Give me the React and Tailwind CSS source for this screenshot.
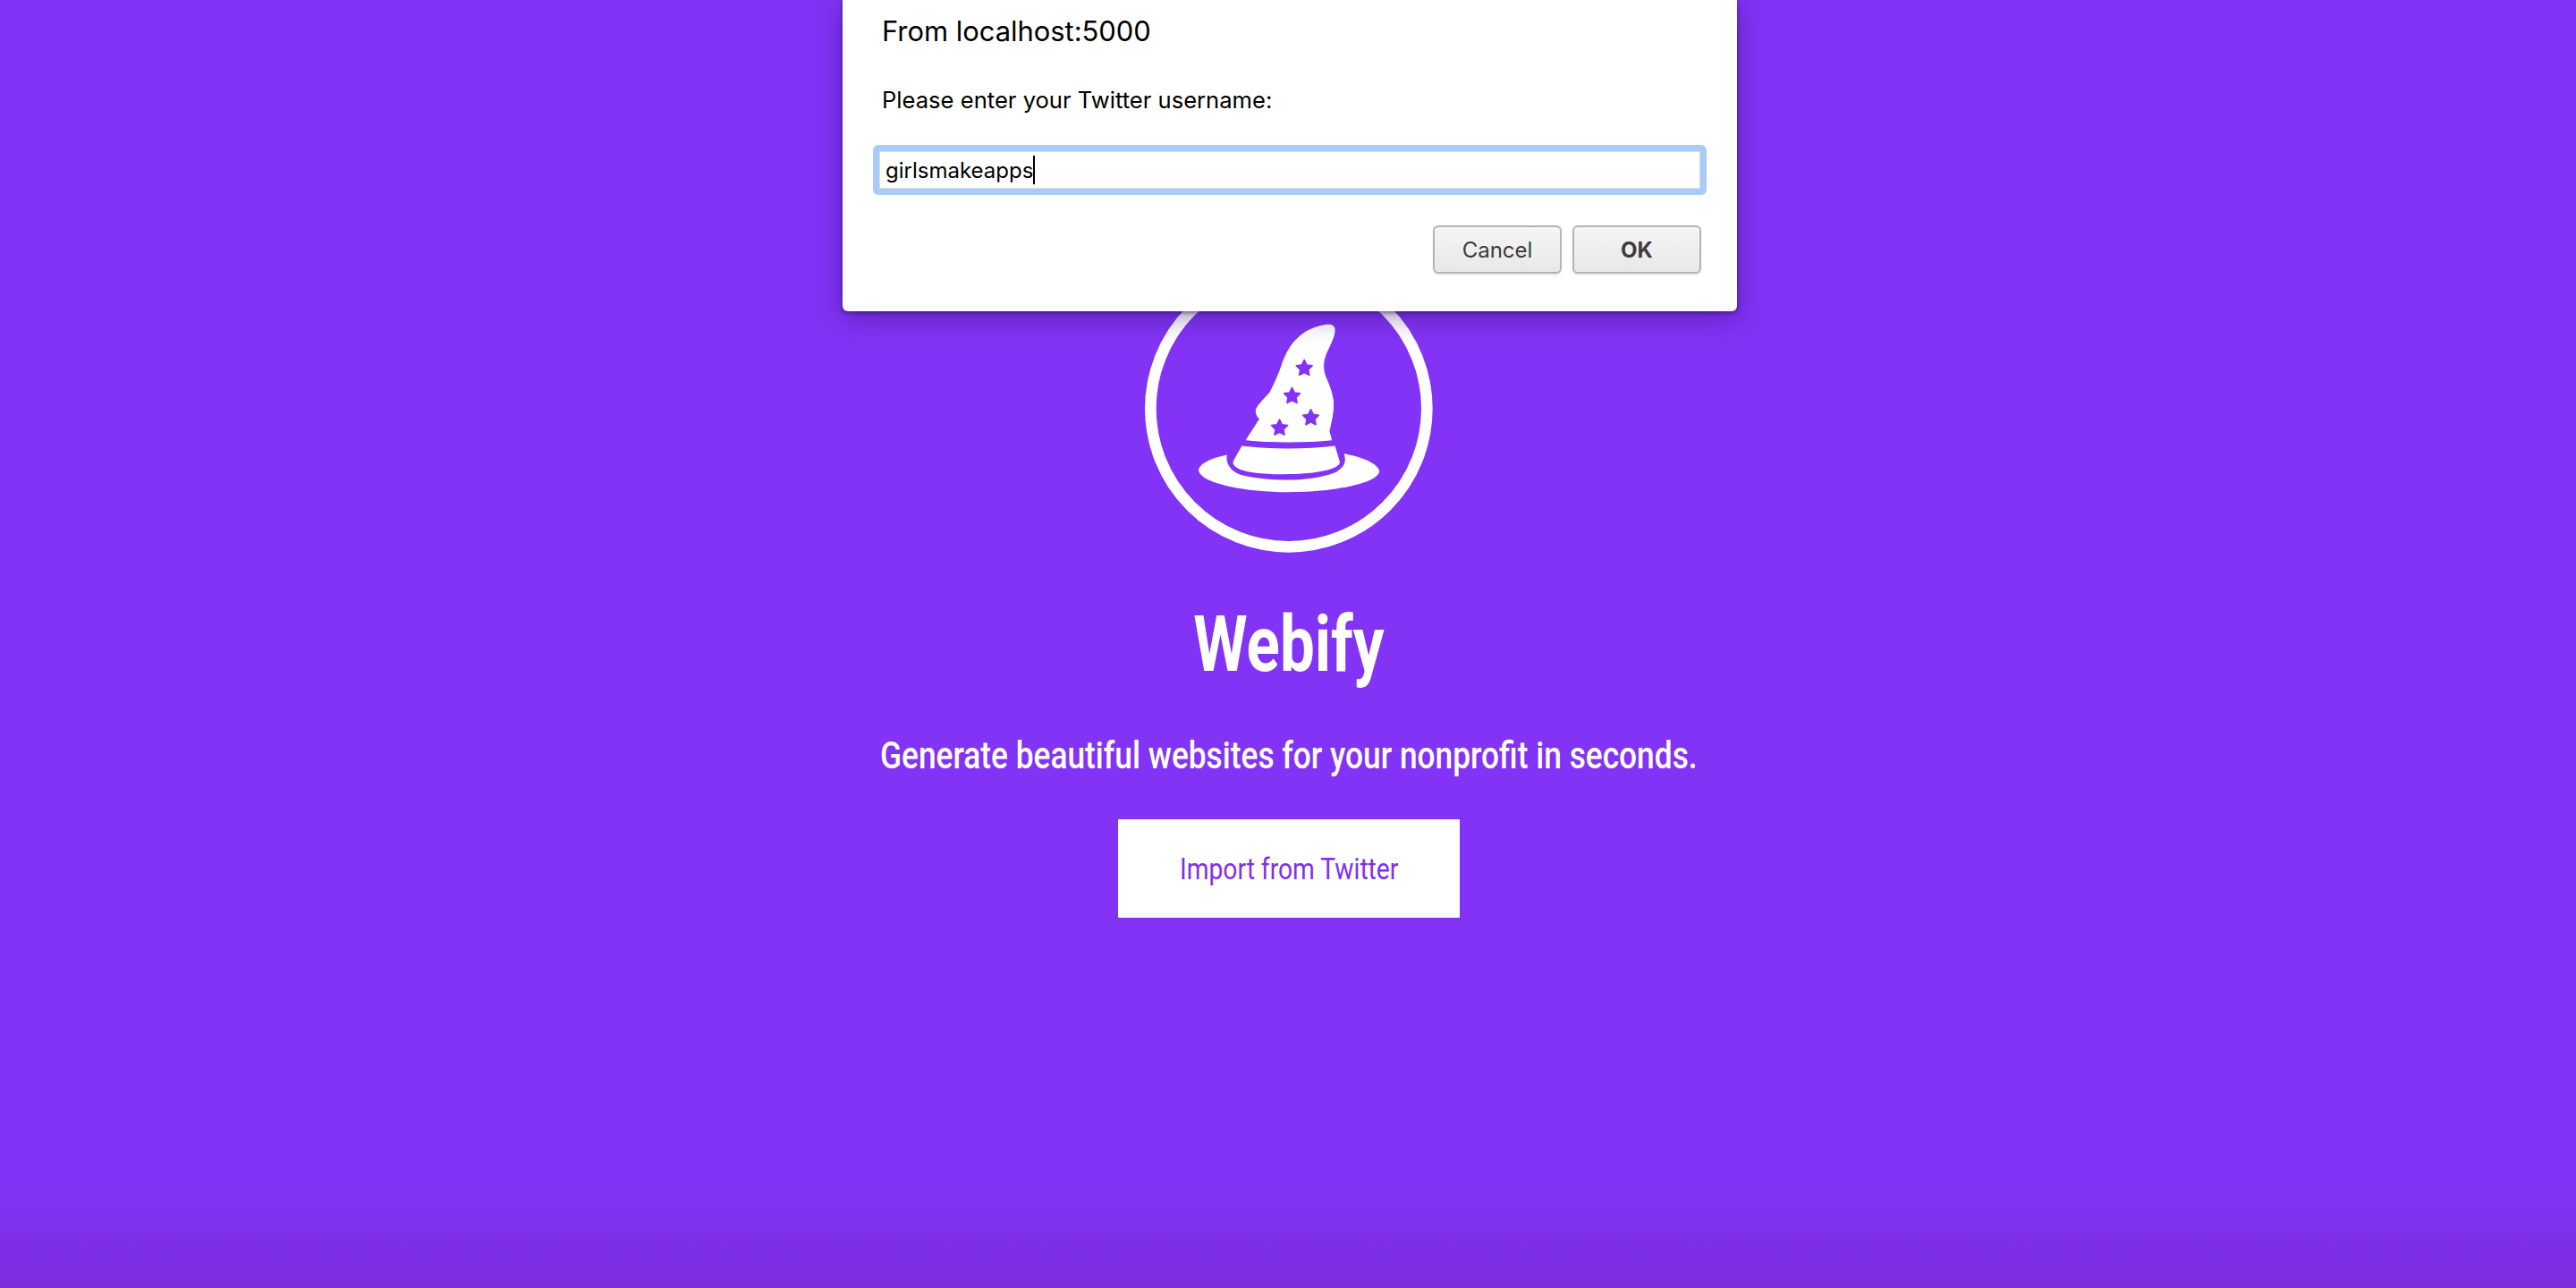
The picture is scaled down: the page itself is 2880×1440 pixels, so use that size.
export default function App() {
  const stars = [[594, 245], [553, 338], [616, 411], [511, 445]];
  const starPath = (cx, cy, r) => {
    let d = "";
    for (let i = 0; i < 10; i++) {
      const rad = i % 2 === 0 ? r : r * 0.5;
      const a = -Math.PI / 2 + (i * Math.PI) / 5;
      d += (i === 0 ? "M" : "L") + (cx + rad * Math.cos(a)).toFixed(1) + " " + (cy + rad * Math.sin(a)).toFixed(1);
    }
    return d + "Z";
  };
  return (
    <div className="relative h-[1440px] w-full overflow-hidden bg-[#8233f5] font-['Roboto',sans-serif]">
      <main className="flex flex-col items-center pl-[2px] pt-[296px]">
        <svg viewBox="60 -102 965 965" className="h-[322px] w-[322px]">
          <circle cx="542" cy="380" r="463" fill="none" stroke="#fff" strokeWidth="38" />
          <path
            fill="#fff"
            stroke="#fff"
            strokeWidth="3"
            strokeLinejoin="round"
            d="M400 485 L445 415 C436 405 430 395 433 383 C437 368 462 346 480 325 C492 302 502 280 510 260 C520 232 528 205 542 183 C560 150 600 108 672 99 C690 98 698 108 695 125 C692 150 672 180 664 203 C656 225 656 245 664 272 C674 295 688 320 691 360 C693 395 684 425 677 455 L685 485 C600 494 480 494 400 485 Z"
          />
          <path
            fill="#fff"
            d="M385 505 C480 517 600 517 697 505 L713 558 C714 570 700 578 672 586 C600 604 470 604 400 590 C375 584 357 575 355 562 C356 552 372 530 385 505 Z"
          />
          <path
            fill="#fff"
            d="M335 535 C285 545 240 565 240 588 C250 632 400 660 540 660 C690 660 838 632 846 590 C840 560 780 542 727 530 C735 555 732 572 700 593 C650 612 590 619 540 619 C480 619 420 612 385 603 C348 592 330 565 335 535 Z"
          />
          {stars.map(([x, y]) => (
            <path key={x} d={starPath(x, y, 28)} fill="#8233f5" stroke="#8233f5" strokeWidth="5" strokeLinejoin="round" />
          ))}
        </svg>
        <h1 className="mt-[50px] scale-x-[0.785] text-[88px] font-bold leading-[104px] whitespace-nowrap text-white">Webify</h1>
        <p className="mt-[48px] scale-x-[0.84] text-[42px] font-medium leading-[50px] whitespace-nowrap text-white">
          Generate beautiful websites for your nonprofit in seconds.
        </p>
        <button className="mt-[46px] flex h-[110px] w-[382px] items-center justify-center bg-white">
          <span className="scale-x-[0.83] text-[34px] whitespace-nowrap text-[#7f2ff0]">Import from Twitter</span>
        </button>
      </main>

      <div className="pointer-events-none absolute inset-x-0 bottom-0 h-[110px] bg-gradient-to-b from-transparent to-[#7a2cdc]" />

      <div className="absolute left-[942px] top-0 flex h-[348px] w-[1000px] flex-col rounded-b-[6px] bg-white font-['Inter',sans-serif] shadow-[0_2px_4px_rgba(50,10,100,0.5),0_6px_30px_rgba(40,10,90,0.45)]">
        <div className="pl-[44px] pt-[16px] text-[30.9px] leading-[38px] text-black">From localhost:5000</div>
        <div className="pl-[44px] pt-[42px] text-[25.6px] leading-[32px] text-black">Please enter your Twitter username:</div>
        <div className="ml-[34px] mt-[34px] h-[56px] w-[932px] rounded-[6px] bg-[#a6ccf7] p-[7px]">
          <div className="flex h-[42px] w-full items-center border border-[#dcdcdc] bg-white pl-[6px] text-[24px] text-black">
            <span className="pt-[2px]">girlsmakeapps</span>
            <span className="h-[32px] w-[2px] bg-black" />
          </div>
        </div>
        <div className="mr-[40px] mt-[34px] flex justify-end gap-[12px] text-[24px] text-[#3c3c3c]">
          <button className="h-[54px] w-[144px] rounded-[6px] border-2 border-[#b4b4b4] bg-gradient-to-b from-[#f5f5f5] to-[#e8e8e8] pt-[2px] shadow-[0_2px_2px_rgba(0,0,0,0.08)]">Cancel</button>
          <button className="h-[54px] w-[144px] rounded-[6px] border-2 border-[#b4b4b4] bg-gradient-to-b from-[#f5f5f5] to-[#e8e8e8] pt-[2px] font-bold shadow-[0_2px_2px_rgba(0,0,0,0.08)]">OK</button>
        </div>
      </div>
    </div>
  );
}
